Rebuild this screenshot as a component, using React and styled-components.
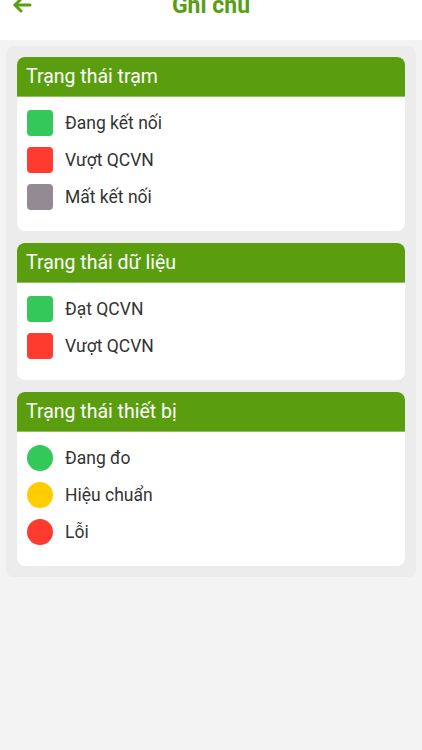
import React from 'react'
import styled, { createGlobalStyle } from 'styled-components'

const Global = createGlobalStyle`
  html, body {
    margin: 0;
    padding: 0;
    background: #f3f3f3;
    font-family: Roboto, "Noto Sans", "Liberation Sans", sans-serif;
  }
`

const Page = styled.div`
  min-height: 750px;
  background: #f3f3f3;
  overflow: hidden;
`

const Header = styled.header`
  height: 40px;
  background: #ffffff;
  display: flex;
  align-items: flex-start;
  justify-content: center;
  position: relative;
  overflow: hidden;
`

const BackButton = styled.button`
  position: absolute;
  left: 10px;
  top: -7px;
  border: 0;
  background: none;
  padding: 0;
  display: flex;
  color: #5a9e14;
`

const Title = styled.h1`
  margin: -7px 0 0;
  font-size: 23px;
  line-height: 26px;
  font-weight: 700;
  color: #5a9e14;
`

const Panel = styled.main`
  margin: 6px 6px 0;
  padding: 11px;
  background: #ececec;
  border-radius: 8px;
  display: flex;
  flex-direction: column;
  gap: 12px;
`

const Card = styled.section`
  background: #ffffff;
  border-radius: 8px;
  overflow: hidden;
`

const CardHead = styled.h2`
  margin: 0;
  height: 40px;
  box-sizing: border-box;
  padding: 0 9px;
  display: flex;
  align-items: center;
  background: #5a9e10;
  border-bottom: 1px solid #8cc160;
  color: #ffffff;
  font-size: 19.5px;
  font-weight: 400;
`

const List = styled.ul`
  list-style: none;
  margin: 0;
  padding: 13px 10px 21px;
  display: flex;
  flex-direction: column;
  gap: 11px;
`

const Row = styled.li`
  display: flex;
  align-items: center;
  gap: 12px;
  height: 26px;
`

const Swatch = styled.span`
  width: 26px;
  height: 26px;
  flex: none;
  border-radius: ${(p) => (p.$round ? '50%' : '4px')};
  background: ${(p) => p.$color};
`

const Label = styled.span`
  font-size: 17.5px;
  color: #333333;
`

const groups = [
  {
    title: 'Trạng thái trạm',
    items: [
      ['Đang kết nối', '#34c759'],
      ['Vượt QCVN', '#ff3b30'],
      ['Mất kết nối', '#938a94'],
    ],
  },
  {
    title: 'Trạng thái dữ liệu',
    items: [
      ['Đạt QCVN', '#34c759'],
      ['Vượt QCVN', '#ff3b30'],
    ],
  },
  {
    title: 'Trạng thái thiết bị',
    round: true,
    items: [
      ['Đang đo', '#34c759'],
      ['Hiệu chuẩn', '#ffcc00'],
      ['Lỗi', '#ff3b30'],
    ],
  },
]

export default function App() {
  return (
    <Page>
      <Global />
      <Header>
        <BackButton aria-label="Quay lại">
          <svg width="24" height="24" viewBox="0 0 24 24" fill="none" stroke="currentColor" strokeWidth="3" strokeLinecap="round" strokeLinejoin="round">
            <path d="M20 12H5" />
            <path d="M11 6l-6 6 6 6" />
          </svg>
        </BackButton>
        <Title>Ghi chú</Title>
      </Header>
      <Panel>
        {groups.map((g) => (
          <Card key={g.title}>
            <CardHead>{g.title}</CardHead>
            <List>
              {g.items.map(([label, color]) => (
                <Row key={label}>
                  <Swatch $color={color} $round={g.round} />
                  <Label>{label}</Label>
                </Row>
              ))}
            </List>
          </Card>
        ))}
      </Panel>
    </Page>
  )
}
